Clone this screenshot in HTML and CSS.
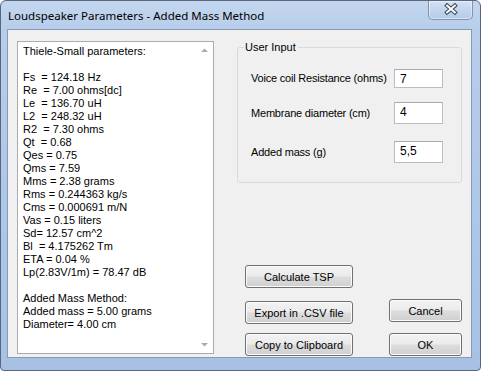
FILE: index.html
```html
<!DOCTYPE html>
<html>
<head>
<meta charset="utf-8">
<link rel="stylesheet" href="styles.css">
</head>
<body>
<div class="window">
  <div class="titlebar">
    <span class="title">Loudspeaker Parameters - Added Mass Method</span>
    <div class="close-btn">
      <svg width="45" height="19" viewBox="0 0 45 19">
        <path d="M19.5 5.5 L27.5 12.5 M27.5 5.5 L19.5 12.5" stroke="#3d4a5e" stroke-width="4.2" stroke-linecap="square" fill="none"/>
        <path d="M19.5 5.5 L27.5 12.5 M27.5 5.5 L19.5 12.5" stroke="#ffffff" stroke-width="2" stroke-linecap="square" fill="none"/>
      </svg>
    </div>
  </div>
  <div class="client">
    <div class="results">
<pre class="results-text">Thiele-Small parameters:

Fs  = 124.18 Hz
Re  = 7.00 ohms[dc]
Le  = 136.70 uH
L2  = 248.32 uH
R2  = 7.30 ohms
Qt  = 0.68
Qes = 0.75
Qms = 7.59
Mms = 2.38 grams
Rms = 0.244363 kg/s
Cms = 0.000691 m/N
Vas = 0.15 liters
Sd= 12.57 cm^2
Bl  = 4.175262 Tm
ETA = 0.04 %
Lp(2.83V/1m) = 78.47 dB

Added Mass Method:
Added mass = 5.00 grams
Diameter= 4.00 cm</pre>
      <div class="scrollbar">
        <svg class="arrow" width="17" height="17" viewBox="0 0 17 17"><polygon points="5,10 12,10 8.5,6.5" fill="#a7abb0"/></svg>
        <svg class="arrow" width="17" height="17" viewBox="0 0 17 17"><polygon points="5,7 12,7 8.5,10.5" fill="#a7abb0"/></svg>
      </div>
    </div>
    <div class="side">
      <fieldset class="group">
        <legend class="group-title">User Input</legend>
        <div class="field field-first">
          <span class="field-label">Voice coil Resistance (ohms)</span>
          <input class="textbox textbox-short" type="text" value="7">
        </div>
        <div class="field field-second">
          <span class="field-label">Membrane diameter (cm)</span>
          <input class="textbox textbox-tall" type="text" value="4">
        </div>
        <div class="field field-third">
          <span class="field-label">Added mass (g)</span>
          <input class="textbox textbox-tall" type="text" value="5,5">
        </div>
      </fieldset>
      <div class="actions">
        <div class="actions-left">
          <button class="btn btn-wide">Calculate TSP</button>
          <button class="btn btn-wide btn-export">Export in .CSV file</button>
          <button class="btn btn-wide btn-copy">Copy to Clipboard</button>
        </div>
        <div class="actions-right">
          <button class="btn btn-narrow">Cancel</button>
          <button class="btn btn-narrow btn-ok">OK</button>
        </div>
      </div>
    </div>
  </div>
</div>
</body>
</html>
```
FILE: styles.css
```css
html, body {
  margin: 0;
  padding: 0;
  background: #ffffff;
}
body {
  font-family: "Liberation Sans", Arial, sans-serif;
  font-size: 11px;
  color: #000;
}
.window {
  box-sizing: border-box;
  width: 481px;
  height: 371px;
  border: 1px solid #56677f;
  border-radius: 6px 6px 4px 4px;
  background: linear-gradient(180deg, #c4d7ef 0px, #b7cdea 28px, #aec6e7 60%, #a8c0e3 100%);
  display: flex;
  flex-direction: column;
  padding: 0 8px 12px 6px;
  overflow: hidden;
}
.titlebar {
  height: 28px;
  display: flex;
  align-items: flex-start;
  justify-content: space-between;
  margin-left: -6px;
  margin-right: -8px;
  padding-left: 7px;
  padding-right: 7px;
}
.title {
  align-self: center;
  font-family: "Noto Sans", sans-serif;
  font-size: 11.5px;
  line-height: 14px;
  margin-top: 1px;
  color: #000;
}
.close-btn {
  width: 45px;
  height: 19px;
  box-sizing: border-box;
  border: 1px solid #8193ad;
  border-top: none;
  border-radius: 0 0 5px 5px;
  background: linear-gradient(180deg, #d6e2f3 0%, #c3d5ee 50%, #b5cae8 100%);
  box-shadow: inset 0 0 0 1px rgba(255,255,255,0.45);
  display: flex;
  align-items: center;
  justify-content: center;
  overflow: hidden;
}
.close-btn svg {
  display: block;
  margin-left: -1px;
  margin-top: -1px;
}
.client {
  flex: 1;
  display: flex;
  align-items: flex-start;
  background: #f0f0f0;
  border: 1px solid #8699b6;
  padding: 11px 9px 1px 9px;
}
.results {
  box-sizing: border-box;
  width: 197px;
  height: 313px;
  border: 1px solid #abadb3;
  background: #ffffff;
  display: flex;
}
.results-text {
  flex: 1;
  margin: 0;
  padding: 3px 0 0 5px;
  font-family: "Liberation Sans", Arial, sans-serif;
  font-size: 11px;
  line-height: 13px;
  white-space: pre;
  overflow: hidden;
}
.scrollbar {
  width: 17px;
  display: flex;
  flex-direction: column;
  justify-content: space-between;
}
.arrow {
  display: block;
}
.side {
  width: 225px;
  margin-left: 23px;
  align-self: stretch;
  display: flex;
  flex-direction: column;
}
.group {
  margin: 0;
  padding: 0 0 19px 13px;
  border: 1px solid #d5dbe0;
  border-radius: 3px;
  min-width: 0;
}
.group-title {
  margin-left: -7px;
  padding: 0 2px 0 1px;
  line-height: 13px;
  font-size: 11px;
}
.field {
  display: grid;
  grid-template-columns: 143px auto;
  align-items: center;
}
.field-first { margin-top: 15px; }
.field-second { margin-top: 14px; }
.field-third { margin-top: 17px; }
.field-label {
  line-height: 13px;
  letter-spacing: -0.2px;
}
.textbox {
  box-sizing: border-box;
  width: 49px;
  margin: 0;
  border: 1px solid #b9bec6;
  border-top-color: #a5aab2;
  background: #ffffff;
  font-family: "Liberation Sans", Arial, sans-serif;
  font-size: 12px;
  color: #000;
  padding: 0 4px 0 5px;
  outline: none;
}
.textbox-short {
  height: 19px;
}
.textbox-tall {
  height: 22px;
  padding-bottom: 3px;
}
.actions {
  margin-top: auto;
  display: grid;
  grid-template-columns: 108px 1fr 73px;
  padding-left: 8px;
}
.actions-left {
  display: flex;
  flex-direction: column;
}
.actions-right {
  grid-column: 3;
  display: flex;
  flex-direction: column;
  justify-content: flex-end;
}
.btn {
  box-sizing: border-box;
  height: 23px;
  margin: 0;
  padding: 0;
  border: 1px solid #707070;
  border-radius: 3px;
  background: linear-gradient(180deg, #f2f2f2 0%, #ebebeb 48%, #dddddd 52%, #cfcfcf 100%);
  box-shadow: inset 0 0 0 1px #fbfbfb;
  font-family: "Liberation Sans", Arial, sans-serif;
  font-size: 11px;
  color: #000;
}
.btn-wide { width: 108px; }
.btn-narrow { width: 73px; }
.btn-export { margin-top: 13px; }
.btn-copy { margin-top: 9px; }
.btn-ok { margin-top: 11px; }
```
